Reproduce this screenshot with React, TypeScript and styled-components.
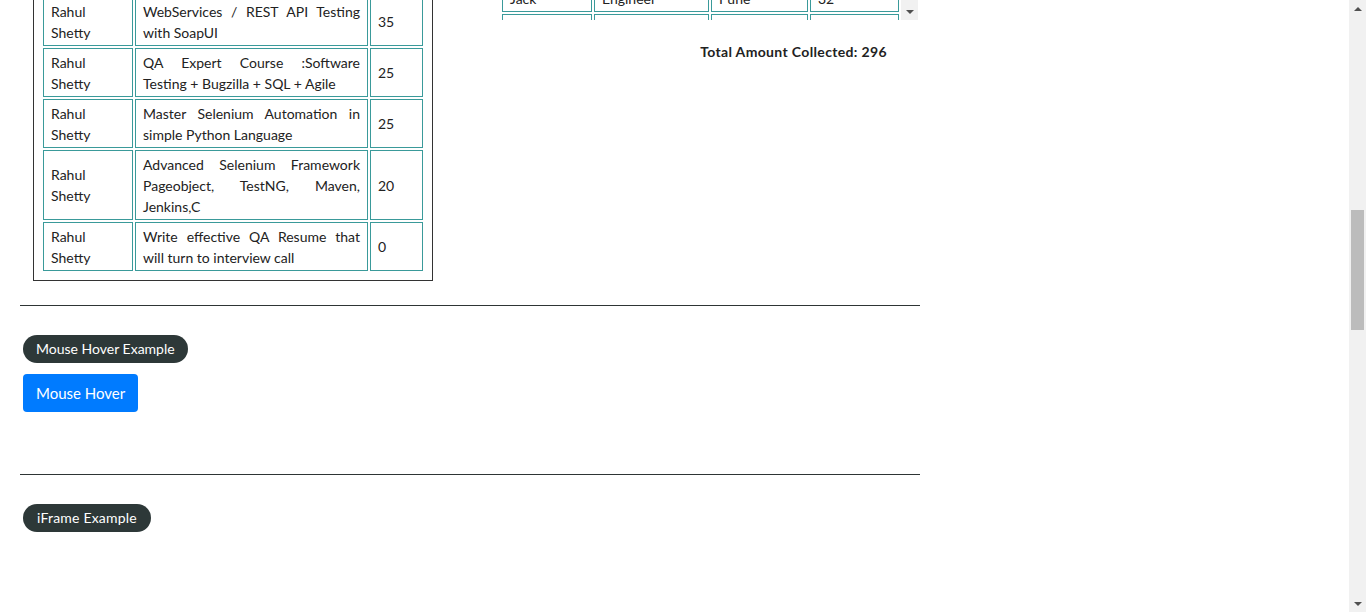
import React from "react";
import styled, { createGlobalStyle } from "styled-components";

const Global = createGlobalStyle`
  html, body { margin: 0; padding: 0; background: #fff; overflow: hidden; }
  body { font-family: "Lato", "Open Sans", sans-serif; color: #333; }
`;

const Viewport = styled.div`
  width: 1366px;
  height: 612px;
  display: flex;
  overflow: hidden;
`;

const Page = styled.div`
  flex: 1;
  overflow: hidden;
`;

const Content = styled.div`
  margin-top: -13px;
  padding-left: 20px;
  width: 900px;
`;

const TopSection = styled.div`
  display: flex;
  align-items: flex-start;
`;

const Fieldset = styled.div`
  margin-left: 13px;
  border: 1px solid #333;
  padding: 7px;
  box-sizing: content-box;
  width: 384px;
`;

const Table = styled.table`
  border-collapse: separate;
  border-spacing: 2px;
  width: 100%;
  table-layout: fixed;
`;

const Cell = styled.td<{ $w?: number; $justify?: boolean }>`
  border: 1px solid #3a9a9a;
  padding: 2.5px 7px;
  font-size: 14px;
  line-height: 21px;
  color: #222;
  width: ${(p) => (p.$w ? `${p.$w}px` : "auto")};
  text-align: ${(p) => (p.$justify ? "justify" : "left")};
  vertical-align: middle;
  box-sizing: border-box;
`;

const RightCol = styled.div`
  margin-left: 67px;
  width: 418px;
  display: flex;
  flex-direction: column;
`;

const ScrollBox = styled.div`
  height: 33px;
  display: flex;
  overflow: hidden;
`;

const ScrollViewport = styled.div`
  flex: 1;
  overflow: hidden;
`;

const ShiftedTable = styled(Table)`
  margin-top: -5px;
`;

const ScrollTrack = styled.div`
  width: 17px;
  background: #f1f1f1;
  display: flex;
  flex-direction: column;
  justify-content: flex-end;
  align-items: center;
`;

const ArrowDown = styled.div`
  height: 17px;
  display: flex;
  align-items: center;
  justify-content: center;
  &::after {
    content: "";
    border-left: 4px solid transparent;
    border-right: 4px solid transparent;
    border-top: 4px solid #505050;
  }
`;

const Total = styled.div`
  margin-top: 23px;
  margin-right: 31px;
  text-align: right;
  font-size: 14px;
  letter-spacing: 0.35px;
  font-weight: 700;
  color: #222;
`;

const Rule = styled.hr<{ $top: number }>`
  margin: ${(p) => p.$top}px 0 0;
  border: 0;
  border-top: 1px solid #2e3535;
  width: 900px;
`;

const Block = styled.div<{ $top: number }>`
  margin-top: ${(p) => p.$top}px;
  padding-left: 3px;
  display: flex;
  flex-direction: column;
  align-items: flex-start;
  gap: 11px;
`;

const Badge = styled.span`
  display: inline-block;
  background: #2d3838;
  color: #fff;
  font-size: 14px;
  line-height: 28px;
  height: 28px;
  padding: 0 13px;
  border-radius: 14px;
`;

const WideBadge = styled(Badge)`
  letter-spacing: 0.2px;
  padding: 0 14px;
`;

const HoverButton = styled.button`
  background: #007bff;
  color: #fff;
  border: 0;
  border-radius: 4px;
  font-family: inherit;
  font-size: 15px;
  height: 38px;
  padding: 0 13px;
`;

const FakeScrollbar = styled.div`
  width: 17px;
  background: #f1f1f1;
  display: flex;
  flex-direction: column;
  align-items: center;
`;

const ArrowBtn = styled.div<{ $up?: boolean }>`
  height: 17px;
  width: 17px;
  display: flex;
  align-items: center;
  justify-content: center;
  &::after {
    content: "";
    border-left: 4px solid transparent;
    border-right: 4px solid transparent;
    ${(p) => (p.$up ? "border-bottom: 4px solid #505050;" : "border-top: 4px solid #505050;")}
  }
`;

const TrackArea = styled.div`
  flex: 1;
  width: 100%;
  display: flex;
  flex-direction: column;
  align-items: center;
`;

const Thumb = styled.div`
  margin-top: 193px;
  width: 13px;
  height: 120px;
  background: #bcbcbc;
`;

const courses: [string, number][] = [
  ["WebServices / REST API Testing with SoapUI", 35],
  ["QA Expert Course :Software Testing + Bugzilla + SQL + Agile", 25],
  ["Master Selenium Automation in simple Python Language", 25],
  ["Advanced Selenium Framework Pageobject, TestNG, Maven, Jenkins,C", 20],
  ["Write effective QA Resume that will turn to interview call", 0],
];

const people = [
  ["Jack", "Engineer", "Pune", "32"],
  ["Joe", "Postman", "Chennai", "46"],
];

export default function App() {
  return (
    <>
      <Global />
      <Viewport>
        <Page>
          <Content>
            <TopSection>
              <Fieldset>
                <Table>
                  <tbody>
                    {courses.map(([c, p], i) => (
                      <tr key={i}>
                        <Cell $w={90}>Rahul Shetty</Cell>
                        <Cell $w={233} $justify>
                          {c}
                        </Cell>
                        <Cell>{p}</Cell>
                      </tr>
                    ))}
                  </tbody>
                </Table>
              </Fieldset>
              <RightCol>
                <ScrollBox>
                  <ScrollViewport>
                    <ShiftedTable>
                      <tbody>
                        {people.map((r, i) => (
                          <tr key={i}>
                            <Cell $w={90}>{r[0]}</Cell>
                            <Cell $w={115}>{r[1]}</Cell>
                            <Cell $w={97}>{r[2]}</Cell>
                            <Cell>{r[3]}</Cell>
                          </tr>
                        ))}
                      </tbody>
                    </ShiftedTable>
                  </ScrollViewport>
                  <ScrollTrack>
                    <ArrowDown />
                  </ScrollTrack>
                </ScrollBox>
                <Total>Total Amount Collected: 296</Total>
              </RightCol>
            </TopSection>
            <Rule $top={24} />
            <Block $top={29}>
              <Badge>Mouse Hover Example</Badge>
              <HoverButton>Mouse Hover</HoverButton>
            </Block>
            <Rule $top={62} />
            <Block $top={29}>
              <WideBadge>iFrame Example</WideBadge>
            </Block>
          </Content>
        </Page>
        <FakeScrollbar>
          <ArrowBtn $up />
          <TrackArea>
            <Thumb />
          </TrackArea>
          <ArrowBtn />
        </FakeScrollbar>
      </Viewport>
    </>
  );
}
